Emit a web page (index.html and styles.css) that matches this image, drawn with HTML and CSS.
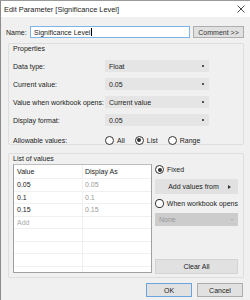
FILE: index.html
```html
<!DOCTYPE html>
<html>
<head>
<meta charset="utf-8">
<link rel="stylesheet" href="styles.css">
</head>
<body>
<div class="window">
  <div class="titlebar">
    <span class="title">Edit Parameter [Significance Level]</span>
    <svg class="close" width="8" height="8" viewBox="0 0 8 8"><path d="M0.5 0.5 L7.5 7.5 M7.5 0.5 L0.5 7.5" stroke="#333" stroke-width="0.9"/></svg>
  </div>
  <div class="body">
    <div class="name-row">
      <span class="name-label">Name:</span>
      <div class="name-input">Significance Level<span class="caret"></span></div>
      <div class="btn comment">Comment &gt;&gt;</div>
    </div>

    <div class="group props">
      <div class="group-title">Properties</div>
      <div class="prow"><span class="plabel">Data type:</span><div class="dd"><span>Float</span><i class="arr"></i></div></div>
      <div class="prow"><span class="plabel">Current value:</span><div class="dd"><span>0.05</span><i class="arr"></i></div></div>
      <div class="prow"><span class="plabel">Value when workbook opens:</span><div class="dd"><span>Current value</span><i class="arr"></i></div></div>
      <div class="prow"><span class="plabel">Display format:</span><div class="dd"><span>0.05</span><i class="arr"></i></div></div>
      <div class="prow radios-row"><span class="plabel">Allowable values:</span>
        <div class="radios">
          <span class="radio"><i class="rc"></i>All</span>
          <span class="radio"><i class="rc on"></i>List</span>
          <span class="radio"><i class="rc"></i>Range</span>
        </div>
      </div>
    </div>

    <div class="group lov">
      <div class="group-title">List of values</div>
      <div class="lov-body">
        <div class="table">
          <div class="tr th"><span class="c1">Value</span><span class="c2">Display As</span></div>
          <div class="tr"><span class="c1">0.05</span><span class="c2 dim">0.05</span></div>
          <div class="tr"><span class="c1">0.1</span><span class="c2 dim">0.1</span></div>
          <div class="tr"><span class="c1">0.15</span><span class="c2 dim">0.15</span></div>
          <div class="tr"><span class="c1 add">Add</span><span class="c2"></span></div>
          <div class="tr"><span class="c1"></span><span class="c2"></span></div>
          <div class="tr"><span class="c1"></span><span class="c2"></span></div>
          <div class="tr"><span class="c1"></span><span class="c2"></span></div>
          <div class="tr last"><span class="c1"></span><span class="c2"></span></div>
        </div>
        <div class="side">
          <span class="radio"><i class="rc on"></i>Fixed</span>
          <div class="btn addfrom">Add values from<i class="rarr"></i></div>
          <span class="radio"><i class="rc"></i>When workbook opens</span>
          <div class="dd disabled"><span>None</span><i class="arr"></i></div>
          <div class="spacer"></div>
          <div class="btn clear">Clear All</div>
        </div>
      </div>
    </div>

    <div class="footer">
      <div class="btn ok">OK</div>
      <div class="btn cancel">Cancel</div>
    </div>
  </div>
</div>
</body>
</html>
```

FILE: styles.css
```css
* { box-sizing: border-box; }
html, body { margin: 0; padding: 0; }
body {
  width: 250px;
  height: 300px;
  overflow: hidden;
  background: #f0f0f0;
  font-family: "Liberation Sans", Arial, sans-serif;
  font-size: 7px;
  color: #222;
  white-space: nowrap;
}
.window {
  width: 250px;
  height: 300px;
  border-left: 1px solid #8c8c8c;
  border-top: 1px solid #9a9a9a;
  display: flex;
  flex-direction: column;
}
.titlebar {
  height: 16px;
  background: #fff;
  display: flex;
  align-items: center;
  justify-content: space-between;
  padding: 0 4px 0 3px;
}
.title { font-size: 7.4px; color: #222; }
.close { display: block; margin-right: 1px; }
.body {
  flex: 1;
  display: flex;
  flex-direction: column;
  padding: 9px 6px 0 5px;
}
.name-row {
  display: flex;
  align-items: center;
  height: 12px;
}
.name-label { width: 24px; }
.name-input {
  width: 160px;
  height: 12px;
  background: #fff;
  border: 1px solid #7fb2e5;
  padding-left: 3px;
  display: flex;
  align-items: center;
  line-height: 1;
}
.caret {
  display: inline-block;
  width: 1px;
  height: 8px;
  background: #000;
  margin-left: 0.5px;
}
.btn {
  background: #e1e1e1;
  border: 1px solid #adadad;
  display: flex;
  align-items: center;
  justify-content: center;
  line-height: 1;
}
.comment {
  margin-left: 3px;
  width: 51px;
  height: 12px;
  color: #333;
}
.group {
  border: 1px solid #dedede;
  border-radius: 2px;
  margin-left: 2px;
  width: 236px;
}
.group-title {
  height: 10px;
  line-height: 10px;
  padding-left: 4px;
  margin-top: -1px;
}
.props {
  margin-top: 5px;
  height: 102px;
  padding-top: 1px;
}
.prow {
  display: flex;
  align-items: center;
  height: 12px;
  margin-top: 6px;
  padding-left: 4px;
}
.props .prow:first-of-type { margin-top: 3px; }
.plabel { width: 92px; }
.dd {
  width: 104px;
  height: 12px;
  background: #e5e5e5;
  border: 1px solid #e5e5e5;
  display: flex;
  align-items: center;
  justify-content: space-between;
  padding: 0 4px 0 3px;
  line-height: 1;
}
.arr {
  display: block;
  width: 1.6px;
  height: 1.6px;
  background: #555;
}
.radios-row { margin-top: 8px; }
.radios { display: flex; align-items: center; }
.radio {
  display: flex;
  align-items: center;
  line-height: 1;
  margin-right: 10px;
}
.rc {
  display: inline-block;
  width: 9px;
  height: 9px;
  border: 1px solid #333;
  border-radius: 50%;
  background: #fff;
  margin-right: 3px;
  position: relative;
}
.rc.on::after {
  content: "";
  position: absolute;
  left: 1.5px; top: 1.5px;
  width: 4px; height: 4px;
  border-radius: 50%;
  background: #333;
}
.lov {
  margin-top: 8px;
  height: 125px;
  padding-top: 1px;
}
.lov-body {
  display: flex;
  padding: 0 0 0 4px;
}
.table {
  width: 139px;
  height: 109px;
  background: #fff;
  border: 1px solid #a0a0a0;
  border-top-color: #bdbdbd;
  display: flex;
  flex-direction: column;
}
.tr {
  display: flex;
  height: 12.5px;
  border-bottom: 1px solid #f0f0f0;
  line-height: 1;
}
.tr.last { border-bottom: none; flex: 1; }
.th { height: 14px; }
.c1 { width: 69px; padding-left: 3px; display: flex; align-items: center; border-right: 1px solid #f0f0f0; }
.c2 { flex: 1; padding-left: 2px; display: flex; align-items: center; }
.dim { color: #999; }
.add { color: #aaa; }
.side {
  margin-left: 3px;
  width: 83px;
  display: flex;
  flex-direction: column;
  padding-top: 1px;
  height: 110px;
}
.side .radio { height: 9px; margin-right: 0; }
.addfrom {
  margin-top: 5px;
  height: 15px;
  border-color: #e1e1e1;
  position: relative;
  padding-right: 6px;
}
.rarr {
  position: absolute;
  right: 6px;
  top: 5px;
  width: 0; height: 0;
  border-left: 3px solid #333;
  border-top: 2.5px solid transparent;
  border-bottom: 2.5px solid transparent;
}
.side .radio:nth-of-type(2) { margin-top: 5px; }
.side .dd.disabled {
  width: 83px;
  margin-top: 5px;
  height: 13px;
  background: #ccc;
  border-color: #ccc;
  color: #999;
}
.side .dd.disabled .arr { background: #aaa; }
.spacer { flex: 1; }
.clear {
  height: 15px;
  border-color: #d4d4d4;
}
.footer {
  display: flex;
  justify-content: flex-end;
  margin-top: 5px;
  padding-right: 1px;
}
.ok, .cancel {
  width: 46px;
  height: 14px;
}
.ok { border-color: #6ca3dc; }
.cancel { margin-left: 5px; }
```
